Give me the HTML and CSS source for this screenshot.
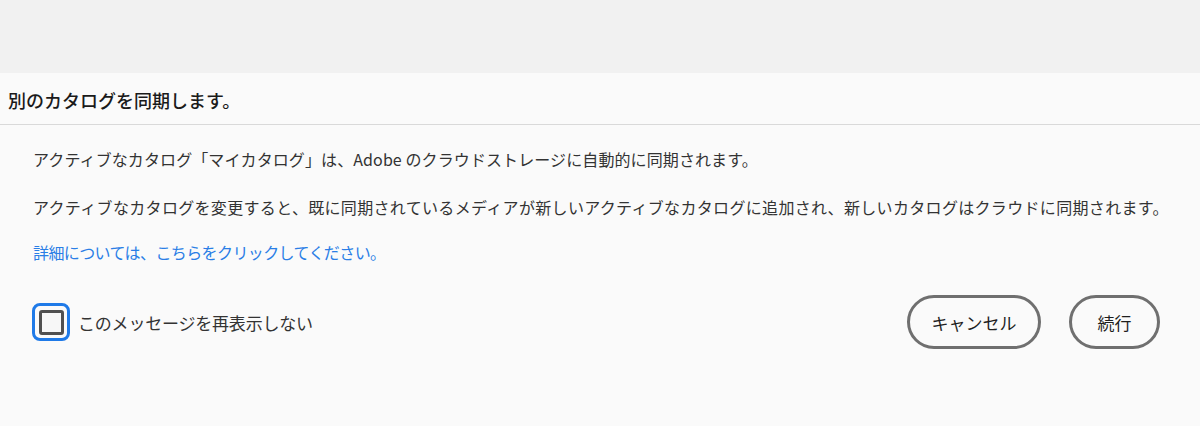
FILE: index.html
```html
<!DOCTYPE html>
<html lang="ja">
<head>
<meta charset="utf-8">
<title>別のカタログを同期します。</title>
<link rel="stylesheet" href="styles.css">
</head>
<body>
<div class="topbar"></div>
<div class="dialog">
  <div class="header">
    <h1 class="title">別のカタログを同期します。</h1>
  </div>
  <div class="content">
    <p class="line first">アクティブなカタログ「マイカタログ」は、Adobe のクラウドストレージに自動的に同期されます。</p>
    <p class="line second">アクティブなカタログを変更すると、既に同期されているメディアが新しいアクティブなカタログに追加され、新しいカタログはクラウドに同期されます。</p>
    <a class="link" href="#">詳細については、こちらをクリックしてください。</a>
  </div>
  <div class="footer">
    <label class="check">
      <span class="box"><span class="inner"></span></span>
      <span class="check-label">このメッセージを再表示しない</span>
    </label>
    <div class="buttons">
      <button class="btn btn-cancel" type="button">キャンセル</button>
      <button class="btn btn-continue" type="button">続行</button>
    </div>
  </div>
</div>
</body>
</html>
```

FILE: styles.css
```css
* { box-sizing: border-box; }

html, body {
  margin: 0;
  padding: 0;
  height: 100%;
}

body {
  background: #fafafa;
  font-family: "Noto Sans CJK JP", "Noto Sans", sans-serif;
  color: #2c2c2c;
  overflow: hidden;
}

.topbar {
  height: 73px;
  background: #f1f1f1;
}

.dialog {
  background: #fafafa;
}

.header {
  height: 52px;
  border-bottom: 1px solid #d9d9d9;
  display: flex;
  align-items: center;
  padding: 2px 0 0 8px;
}

.title {
  margin: 0;
  font-size: 18px;
  font-weight: 500;
  color: #1a1a1a;
  letter-spacing: 0;
}

.content {
  padding: 0 0 0 33px;
  display: flex;
  flex-direction: column;
  align-items: flex-start;
}

.line {
  margin: 24px 0 0;
  font-size: 16px;
  line-height: 24px;
  color: #333333;
}

.line.first {
  margin-top: 22px;
  letter-spacing: 0.1px;
}

.line.second {
  letter-spacing: 0.33px;
}

.link {
  margin-top: 21px;
  font-size: 16px;
  line-height: 24px;
  color: #2a7ee6;
  text-decoration: none;
  letter-spacing: -0.6px;
}

.footer {
  margin-top: 31px;
  display: flex;
  align-items: center;
  justify-content: space-between;
  padding: 0 40px 0 32px;
  height: 54px;
}

.check {
  display: flex;
  align-items: center;
}

.box {
  width: 38px;
  height: 38px;
  border: 3px solid #1f7ae8;
  border-radius: 8px;
  display: flex;
  align-items: center;
  justify-content: center;
}

.inner {
  width: 25px;
  height: 25px;
  border: 3px solid #505050;
  border-radius: 3px;
  background: #f7f7f7;
}

.check-label {
  margin-left: 8px;
  font-size: 17px;
  color: #333333;
  letter-spacing: -0.2px;
}

.buttons {
  display: flex;
  gap: 28px;
}

.btn {
  height: 54px;
  border: 3px solid #6f6f6f;
  border-radius: 27px;
  background: #fafafa;
  font-family: "Noto Sans CJK JP", "Noto Sans", sans-serif;
  font-size: 17px;
  color: #1e1e1e;
  padding: 0;
}

.btn-cancel {
  width: 134px;
}

.btn-continue {
  width: 91px;
}
```
